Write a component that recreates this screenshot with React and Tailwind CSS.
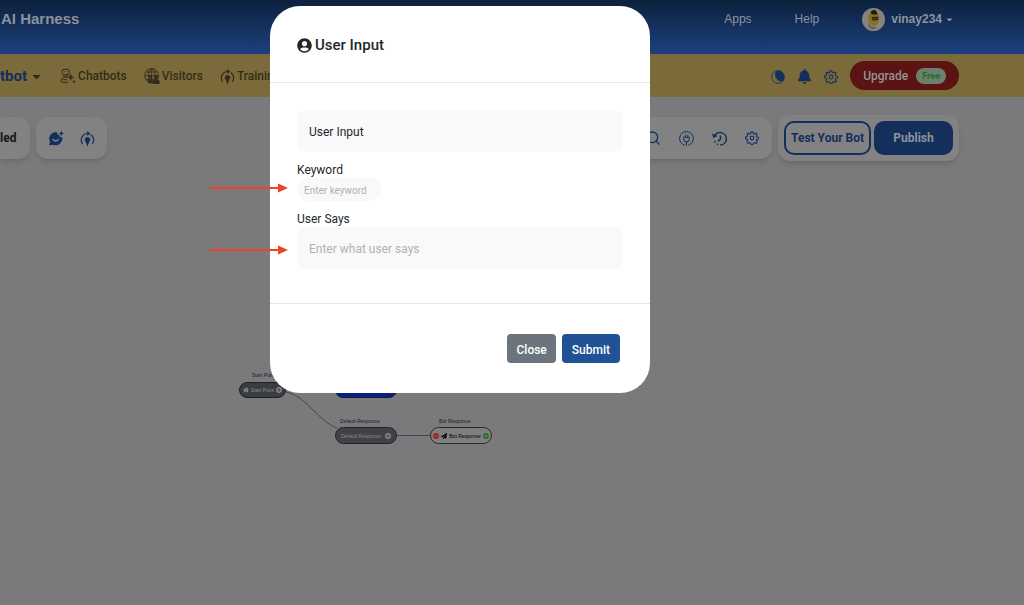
import { FaUserCircle, FaHome, FaPaperPlane, FaPlusCircle, FaMinusCircle, FaBell, FaCaretDown } from "react-icons/fa";
import { Search } from "lucide-react";

function GearIcon({ className }) {
  return (
    <svg viewBox="0 0 24 24" className={className} fill="none" stroke="currentColor" strokeWidth="1.8" strokeLinejoin="round">
      <circle cx="12" cy="12" r="3.2" />
      <path d="M10.3 1.5h3.4l.5 2.7 2.1.9 2.3-1.6 2.4 2.4-1.6 2.3.9 2.1 2.7.5v3.4l-2.7.5-.9 2.1 1.6 2.3-2.4 2.4-2.3-1.6-2.1.9-.5 2.7h-3.4l-.5-2.7-2.1-.9-2.3 1.6L3 18.100l1.600-2.300-.9-2.100-2.700-.5v-3.400l2.700-.5.9-2.100L3 5.900l2.400-2.400 2.300 1.600 2.100-.9z" />
    </svg>
  );
}

function TrainIcon({ className }) {
  return (
    <svg viewBox="0 0 24 24" className={className} fill="none" stroke="currentColor" strokeWidth="2">
      <path d="M4 20.500A10.500 10.500 0 0 1 12 4" />
      <path d="M20 20.500A10.500 10.500 0 0 0 17 5.500" />
      <path d="M11.500 0l5 4-5 4z" fill="currentColor" stroke="none" />
      <path d="M12 9.500a4.500 4.500 0 0 1 2.500 8.200V20h-5v-2.300A4.500 4.500 0 0 1 12 9.500z" fill="currentColor" stroke="none" />
      <path d="M12 19v5" strokeWidth="2" />
    </svg>
  );
}

function ChatbotIcon({ className }) {
  return (
    <svg viewBox="0 0 24 24" className={className} fill="none" stroke="currentColor" strokeWidth="1.500">
      <rect x="3" y="2" width="11" height="8" rx="3.500" />
      <path d="M6.500 5.500h1M10 5.500h1M5 10.500l2 2h4l1.500-2M12 21.500H2c-1-4 1-8 4.500-8H10M4 17.500h7" />
      <path d="M16 8l1.500 4.500L22 14l-4.500 1.500L16 20l-1.500-4.500L10 14l4.500-1.500z" fill="currentColor" stroke="none" />
      <path d="M21 17l1 2.500 2 .500-2 1-1 2.500-1-2.500-2-1 2-.500z" fill="currentColor" stroke="none" />
    </svg>
  );
}

function VisitorsIcon({ className }) {
  return (
    <svg viewBox="0 0 24 24" className={className} fill="none" stroke="currentColor" strokeWidth="1.300">
      <circle cx="11.500" cy="11.500" r="10.500" />
      <ellipse cx="11.500" cy="11.500" rx="5" ry="10.500" />
      <path d="M11.500 1v21M1 11.500h21M3 6h17M3 17h17" />
      <g fill="currentColor" stroke="none">
        <circle cx="10" cy="13.500" r="2.500" />
        <circle cx="18" cy="13.500" r="3" />
        <path d="M6 23v-4c0-3 7-3 7 0v4zM13 24v-4c0-4 10.500-4 10.500 0v4z" />
      </g>
    </svg>
  );
}

function SmileChatIcon({ className }) {
  return (
    <svg viewBox="0 0 24 24" className={className}>
      <path fill="currentColor" d="M14 3.200A10 10 0 0 0 3 17.500L1.500 23l6-1A10 10 0 0 0 21.500 11h-3.500l-1-3.500-3.500-1z" />
      <path d="M7 13.500q4.500 6 9 0" fill="none" stroke="#828282" strokeWidth="2" />
      <path fill="currentColor" d="M20 1l1.200 3 2.800 1-2.800 1.200L20 9l-1.200-2.800L16 5l2.800-1z" />
    </svg>
  );
}

function MoonIcon({ className }) {
  return (
    <svg viewBox="0 0 24 24" className={className}>
      <circle cx="12" cy="12" r="10.800" fill="none" stroke="currentColor" strokeWidth="1.400" />
      <path fill="currentColor" d="M10 1.200A11 11 0 0 1 20 19.500C13 20 7 15 7 8c0-3 1-5.500 3-6.800z" />
    </svg>
  );
}

function PlugIcon({ className }) {
  return (
    <svg viewBox="0 0 24 24" className={className} fill="none" stroke="currentColor" strokeWidth="1.600">
      <path d="M9 22.600a11 11 0 1 1 6 0" />
      <path d="M10 6v4M14 6v4M12 17v6.500" />
      <path d="M7.500 10h9v3a4.500 4.500 0 0 1-9 0z" />
    </svg>
  );
}

function HistoryIcon({ className }) {
  return (
    <svg viewBox="0 0 24 24" className={className} fill="none" stroke="currentColor" strokeWidth="2.400">
      <path d="M4 8A10 10 0 1 1 13 22.500M13.500 7v6l-4 3.500" />
      <path d="M0 4l2 7 7-3z" fill="currentColor" stroke="none" />
      <path d="M4 16l1.500 2M8 20.500l2 1.200" />
    </svg>
  );
}

function Avatar() {
  return (
    <svg viewBox="0 0 24 24" className="size-[23px]">
      <circle cx="12" cy="12" r="12" fill="#85847e" />
      <path d="M7 7q2-4 6-4 5 1 5 6l-1 6q-2 4-5 4-3-1-4-4l-2-3z" fill="#8a701d" />
      <path d="M9 4q3-3 6-1l1 4-6-.500z" fill="#191917" />
      <path d="M10 9.500l7-.500v3.500l-6 .500z" fill="#22211b" />
      <path d="M12 11h1M15 11h1" stroke="#a88d36" />
      <path d="M7 16l3 4 5 0-2 2q-4 0-6-3z" fill="#565956" />
    </svg>
  );
}

function RedArrow({ className }) {
  return (
    <svg viewBox="0 0 78 10" className={className}>
      <path d="M0 5H70" stroke="#ee4326" strokeWidth="2" />
      <path d="M68 0.500L78 5l-10 4.500z" fill="#ee4326" />
    </svg>
  );
}

function FlowCanvas() {
  return (
    <div className="absolute left-0 top-0 font-['Liberation_Sans',sans-serif] text-[5px] leading-[8px]">
      <svg viewBox="0 0 520 460" className="absolute left-0 top-0 h-[460px] w-[520px]" fill="none" stroke="#47474b" strokeWidth="1">
        <path d="M286 392C306 396 318 421 337 428M397 435.500H431" />
      </svg>
      <span className="absolute left-[252px] top-[371px] whitespace-nowrap text-[#1d1d20]">Start Point</span>
      <div className="absolute left-[239px] top-[382px] flex h-4 w-[47px] items-center justify-center gap-[2px] rounded-full border border-[#1f2124] bg-[#393c41] whitespace-nowrap text-[#8a8b8e]">
        <FaHome className="size-[6px]" />Start Point<FaPlusCircle className="size-[6px]" />
      </div>
      <div className="absolute left-[335px] top-[382px] h-4 w-[62px] rounded-full border border-[#101a4a] bg-[#0b1f7f]" />
      <span className="absolute left-[340px] top-[417px] whitespace-nowrap text-[#1d1d20]">Default Responce</span>
      <div className="absolute left-[335px] top-[427px] flex h-[17px] w-[62px] items-center justify-center gap-1 rounded-full border border-[#222226] bg-[#414147] whitespace-nowrap text-[#89898d]">
        Default Responce<FaPlusCircle className="size-[6px]" />
      </div>
      <span className="absolute left-[439px] top-[417px] whitespace-nowrap text-[#1d1d20]">Bot Responce</span>
      <div className="absolute left-[430px] top-[427px] flex h-[17px] w-[62px] items-center justify-center gap-[2px] rounded-full border border-[#29292c] bg-[#7f7f82] whitespace-nowrap text-black">
        <FaMinusCircle className="size-[6px] text-[#a01e18]" /><FaPaperPlane className="size-[6px]" />Bot Response<FaPlusCircle className="size-[6px] text-[#176b1b]" />
      </div>
    </div>
  );
}

const iconButton = "flex items-center justify-center text-[#142f5c]";

export default function App() {
  return (
    <div className="relative min-h-screen overflow-hidden bg-[#7a7a7c] font-[Roboto,sans-serif]">
      <header className="flex h-[54px] items-start justify-between bg-linear-to-b from-[#0d213d] to-[#1c4080] pr-[70px] pt-[7px] font-['Liberation_Sans',sans-serif] text-[#8c939e]">
        <h1 className="pl-px text-[15px] font-bold leading-6">AI Harness</h1>
        <nav className="flex items-center text-xs leading-6">
          <a href="#apps" className="mr-[43px]">Apps</a>
          <a href="#help" className="mr-[43px]">Help</a>
          <button className="flex items-center gap-[6px] font-bold"><Avatar />vinay234<FaCaretDown className="-ml-[3px] size-[9px]" /></button>
        </nav>
      </header>

      <div className="flex h-[43px] items-center justify-between bg-[#7b6b3a] pr-[65px] text-xs font-medium text-[#332c18]">
        <nav className="flex items-center pt-[2px]">
          <button className="mr-[17px] flex items-center gap-[3px] text-[15px] font-bold text-[#142f5c]">tbot<FaCaretDown className="size-[13px] text-[#332c18]" /></button>
          <a href="#chatbots" className="mr-[17px] flex items-center gap-[2px]"><ChatbotIcon className="size-4" />Chatbots</a>
          <a href="#visitors" className="mr-[17px] flex items-center gap-[2px]"><VisitorsIcon className="size-4" />Visitors</a>
          <a href="#training" className="flex items-center gap-[2px]"><TrainIcon className="size-[15px]" />Training</a>
        </nav>
        <div className="flex items-center">
          <button aria-label="Theme" className={`${iconButton} mr-3 pt-[2px]`}><MoonIcon className="size-[14px]" /></button>
          <button aria-label="Notifications" className={`${iconButton} mr-3 pt-[2px]`}><FaBell className="size-[15px]" /></button>
          <button aria-label="Settings" className={`${iconButton} mr-3 pt-[2px]`}><GearIcon className="size-[14px]" /></button>
          <button className="flex h-[29px] items-center gap-2 rounded-full bg-[#5b1313] px-[13px] text-[#969292]">
            Upgrade<span className="rounded-full bg-[#6c806f] px-[6px] text-[9px] font-bold leading-4 text-[#1d7120]">Free</span>
          </button>
        </div>
      </div>

      <div className="flex items-center justify-between pr-[65px] pt-[18px]">
        <div className="flex gap-[6px]">
          <div className="flex h-[42px] w-[30px] items-center rounded-r-xl bg-[#828282] text-xs font-bold text-[#141417] shadow-md shadow-black/10">led</div>
          <div className="flex h-[42px] items-center gap-4 rounded-xl bg-[#828282] px-3 shadow-md shadow-black/10">
            <button aria-label="Add chat" className={iconButton}><SmileChatIcon className="size-4" /></button>
            <button aria-label="Train bot" className={iconButton}><TrainIcon className="size-[15px]" /></button>
          </div>
        </div>
        <div className="flex items-center gap-[6px]">
          <div className="flex h-[42px] items-center gap-[18px] rounded-xl bg-[#828282] px-[13px] shadow-md shadow-black/10">
            <button aria-label="Search" className={iconButton}><Search className="size-4" /></button>
            <button aria-label="Integrations" className={iconButton}><PlugIcon className="size-[15px]" /></button>
            <button aria-label="History" className={iconButton}><HistoryIcon className="size-[15px]" /></button>
            <button aria-label="Bot settings" className={iconButton}><GearIcon className="size-[14px]" /></button>
          </div>
          <div className="flex h-[46px] items-center gap-[3px] rounded-xl bg-[#828282] px-[6px] text-xs font-bold shadow-md shadow-black/10">
            <button className="h-[34px] w-[87px] rounded-[10px] border-2 border-[#142f5c] whitespace-nowrap text-[#142f5c]">Test Your Bot</button>
            <button className="h-[34px] w-[79px] rounded-[10px] bg-[#142f5c] text-[#8d939d]">Publish</button>
          </div>
        </div>
      </div>

      <FlowCanvas />

      <div role="dialog" aria-labelledby="dialog-title" className="absolute inset-x-0 top-[6px] mx-auto w-[380px] -translate-x-[52px] rounded-[30px] bg-white text-[#24272b]">
        <div className="flex h-[77px] items-center gap-[3px] border-b border-[#e6e7e9] px-[27px] pt-[2px]">
          <FaUserCircle className="size-[15px]" />
          <h2 id="dialog-title" className="text-[15px] font-medium">User Input</h2>
        </div>
        <form className="px-[27px] pb-[34px] pt-[27px] text-xs">
          <input aria-label="Name" defaultValue="User Input" className="h-[42px] w-full rounded-lg bg-[#f9f9f9] px-3 pt-[2px]" />
          <label htmlFor="keyword" className="mt-[11px] block leading-[15px]">Keyword</label>
          <input id="keyword" placeholder="Enter keyword" className="block h-[23px] w-[84px] rounded-full bg-[#f9f9f9] px-[7px] pt-[2px] text-[10px] placeholder:text-[#adb2b8]" />
          <label htmlFor="says" className="mt-[11px] block leading-[15px]">User Says</label>
          <input id="says" placeholder="Enter what user says" className="block h-[42px] w-full rounded-lg bg-[#f9f9f9] px-3 pt-[2px] placeholder:text-[#adb2b8]" />
        </form>
        <div className="flex h-[90px] items-center justify-end gap-[6px] border-t border-[#e6e7e9] pr-[30px] text-xs font-medium text-white">
          <button className="h-[29px] rounded bg-[#6c757d] px-[9px] pt-[2px]">Close</button>
          <button className="h-[29px] rounded bg-[#205295] px-[10px] pt-[2px]">Submit</button>
        </div>
      </div>

      <RedArrow className="absolute left-[210px] top-[183px] h-[10px] w-[78px]" />
      <RedArrow className="absolute left-[210px] top-[245px] h-[10px] w-[78px]" />
    </div>
  );
}
